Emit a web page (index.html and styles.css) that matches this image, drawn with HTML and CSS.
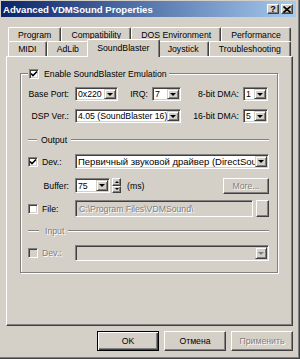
FILE: index.html
```html
<!DOCTYPE html>
<html>
<head>
<meta charset="utf-8">
<link rel="stylesheet" href="styles.css">
</head>
<body>
<div class="window">
  <div class="titlebar">
    <span class="title">Advanced VDMSound Properties</span>
    <div class="tbtns">
      <span class="tbtn help">?</span>
      <span class="tbtn close"><svg width="8" height="7" viewBox="0 0 8 7"><path d="M0.5 0.5 L7.5 6.5 M7.5 0.5 L0.5 6.5" stroke="#000" stroke-width="1.6"/></svg></span>
    </div>
  </div>
  <div class="content">
    <div class="tabs">
      <div class="tabrow back">
        <div class="tab">Program</div>
        <div class="tab">Compatibility</div>
        <div class="tab">DOS Environment</div>
        <div class="tab">Performance</div>
      </div>
      <div class="tabrow front">
        <div class="tab">MIDI</div>
        <div class="tab">AdLib</div>
        <div class="tab selected">SoundBlaster</div>
        <div class="tab">Joystick</div>
        <div class="tab">Troubleshooting</div>
      </div>
    </div>
    <div class="panel">
      <div class="group">
        <div class="legend">
          <span class="check checked"><svg width="8" height="8" viewBox="0 0 8 8"><path d="M1 3.5 L3 5.5 L7 1.5" fill="none" stroke="#000" stroke-width="1.6"/></svg></span>
          <span class="ltext">Enable SoundBlaster Emulation</span>
        </div>
        <div class="row r1">
          <span class="lbl w47">Base Port:</span>
          <span class="combo w43"><span class="val">0x220</span><span class="drop"><i></i></span></span>
          <span class="lbl w34">IRQ:</span>
          <span class="combo w29"><span class="val">7</span><span class="drop"><i></i></span></span>
          <span class="lbl w62">8-bit DMA:</span>
          <span class="combo w25"><span class="val">1</span><span class="drop"><i></i></span></span>
        </div>
        <div class="row r2">
          <span class="lbl w47">DSP Ver.:</span>
          <span class="combo w106"><span class="val">4.05 (SoundBlaster 16)</span><span class="drop"><i></i></span></span>
          <span class="lbl w62">16-bit DMA:</span>
          <span class="combo w25"><span class="val">5</span><span class="drop"><i></i></span></span>
        </div>
        <div class="sep s-out">
          <span class="line short"></span><span class="stext">Output</span><span class="line long"></span>
        </div>
        <div class="row r3">
          <span class="check checked"><svg width="8" height="8" viewBox="0 0 8 8"><path d="M1 3.5 L3 5.5 L7 1.5" fill="none" stroke="#000" stroke-width="1.6"/></svg></span>
          <span class="clbl">Dev.:</span>
          <span class="combo wfull"><span class="val cyr">Первичный звуковой драйвер (DirectSound)</span><span class="drop"><i></i></span></span>
        </div>
        <div class="row r4">
          <span class="lbl w47">Buffer:</span>
          <span class="combo w34c"><span class="val">75</span><span class="drop"><i></i></span></span>
          <span class="spin"><span class="sbtn"><i class="up"></i></span><span class="sbtn"><i class="down"></i></span></span>
          <span class="ms">(ms)</span>
          <span class="btn small disabled">More...</span>
        </div>
        <div class="row r5">
          <span class="check"></span>
          <span class="clbl">File:</span>
          <span class="edit disabled">C:\Program Files\VDMSound\</span>
          <span class="btn browse"></span>
        </div>
        <div class="sep s-in">
          <span class="line short2"></span><span class="stext disabled">Input</span><span class="line long"></span>
        </div>
        <div class="row r6">
          <span class="check disabledbox"></span>
          <span class="clbl disabled">Dev.:</span>
          <span class="combo wfull disabledcombo"><span class="val"></span><span class="drop"><i class="gray"></i></span></span>
        </div>
      </div>
    </div>
    <div class="buttons">
      <span class="btn big default">OK</span>
      <span class="btn big">Отмена</span>
      <span class="btn big disabled">Применить</span>
    </div>
  </div>
</div>
</body>
</html>
```

FILE: styles.css
```css
* { box-sizing: border-box; }
html, body { margin: 0; padding: 0; }
body {
  width: 300px; height: 359px; overflow: hidden;
  background: #d4d0c8;
  font-family: "Liberation Sans", Arial, sans-serif;
  font-size: 8.7px;
  color: #000;
}
.window {
  width: 300px; height: 359px;
  background: #d4d0c8;
  border-right: 1px solid #404040;
  border-bottom: 1px solid #404040;
  box-shadow: inset -1px -1px 0 #808080;
  padding: 1px 3px 0 1px;
  display: flex; flex-direction: column;
}
.titlebar {
  height: 16px;
  background: linear-gradient(to right, #0a246a, #a6caf0);
  display: flex; align-items: center; justify-content: space-between;
  padding: 0 3px 0 2px;
}
.title { color: #fff; font-weight: bold; font-size: 9.6px; letter-spacing: 0; }
.tbtns { display: flex; gap: 2px; }
.tbtn {
  width: 12px; height: 10px; background: #d4d0c8;
  border: 1px solid; border-color: #fff #404040 #404040 #fff;
  box-shadow: inset -1px -1px 0 #808080;
  display: flex; align-items: center; justify-content: center;
  font-weight: bold; font-size: 9px; line-height: 1;
}
.content { display: flex; flex-direction: column; padding: 10px 0 0 5px; }
.tabs { margin-left: 2px; width: 283px; display: flex; flex-direction: column; }
.tabrow { display: flex; }
.tabrow.back { height: 14px; }
.tabrow.front { height: 15px; }
.tab {
  flex: 1 1 auto;
  text-align: center;
  border: 1px solid; border-color: #fff #404040 transparent #fff;
  border-bottom: 0;
  border-radius: 2px 2px 0 0;
  box-shadow: inset -1px 0 0 #808080;
  padding-top: 2px;
  white-space: nowrap;
  background: #d4d0c8;
}
.tab.selected {
  position: relative; z-index: 2;
  margin: -2px -2px -1px; padding-top: 3px;
}
.panel {
  width: 287px; height: 270px;
  border: 1px solid; border-color: #fff #404040 #404040 #fff;
  box-shadow: inset -1px -1px 0 #808080;
  padding: 16px 14px 0 13px;
}
.group {
  height: 200px;
  border: 1px solid #808080;
  box-shadow: inset 1px 1px 0 #fff, 1px 1px 0 #fff;
  padding: 0 8px 0 7px;
  display: flex; flex-direction: column;
}
.legend {
  display: flex; align-items: center; align-self: flex-start;
  margin-top: -6px; height: 11px; background: #d4d0c8;
  padding: 0 2px 0 1px;
}
.ltext { margin-left: 5px; }
.check {
  width: 10px; height: 10px; flex: none;
  background: #fff;
  border: 1px solid; border-color: #808080 #fff #fff #808080;
  box-shadow: inset 1px 1px 0 #404040, inset -1px -1px 0 #d4d0c8;
  display: flex; align-items: center; justify-content: center;
}
.check svg { display: block; }
.check.disabledbox { background: #d4d0c8; }
.row { display: flex; align-items: center; }
.r1 { margin-top: 8px; height: 14px; }
.r2 { margin-top: 8px; height: 14px; }
.r3 { margin-top: 9px; height: 15px; }
.r4 { margin-top: 9px; height: 15px; }
.r5 { margin-top: 7px; height: 17px; }
.r6 { margin-top: 9px; height: 16px; }
.lbl { text-align: right; padding-right: 6px; flex: none; white-space: nowrap; }
.w47 { width: 47px; }
.w34 { width: 34px; padding-right: 4px; }
.w62 { width: 62px; padding-right: 4px; }
.combo {
  height: 100%; flex: none;
  background: #fff;
  border: 1px solid; border-color: #808080 #fff #fff #808080;
  box-shadow: inset 1px 1px 0 #404040, inset -1px -1px 0 #d4d0c8;
  display: flex; align-items: stretch;
  padding: 1px;
  white-space: nowrap; overflow: hidden;
}
.val { flex: 1 1 auto; min-width: 0; overflow: hidden; display: flex; align-items: center; padding-left: 1px; }
.val.cyr { font-size: 9.5px; }
.drop {
  width: 12px; flex: none;
  background: #d4d0c8;
  border: 1px solid; border-color: #d4d0c8 #404040 #404040 #d4d0c8;
  box-shadow: inset 1px 1px 0 #fff, inset -1px -1px 0 #808080;
  display: flex; align-items: center; justify-content: center;
}
.drop i {
  width: 0; height: 0;
  border-left: 3px solid transparent; border-right: 3px solid transparent;
  border-top: 3px solid #000;
}
.drop i.gray { border-top-color: #808080; }
.w43 { width: 43px; }
.w29 { width: 29px; }
.w25 { width: 25px; }
.w106 { width: 106px; }
.w34c { width: 35px; }
.wfull { flex: 1 1 auto; }
.clbl { width: 37px; padding-left: 4px; flex: none; }
.sep { display: flex; align-items: center; height: 11px; }
.s-out { margin-top: 11px; }
.s-in { margin-top: 8px; }
.line { height: 2px; border-top: 1px solid #808080; border-bottom: 1px solid #fff; }
.line.short { width: 9px; margin-right: 4px; }
.line.short2 { width: 11px; margin-right: 6px; }
.line.long { flex: 1 1 auto; margin-left: 4px; }
.disabled { color: #808080; text-shadow: 1px 1px 0 #fff; }
.spin { display: flex; flex-direction: column; width: 9px; height: 100%; margin-left: 2px; }
.sbtn {
  flex: 1 1 0;
  background: #d4d0c8;
  border: 1px solid; border-color: #fff #404040 #404040 #fff;
  box-shadow: inset -1px -1px 0 #808080;
  display: flex; align-items: center; justify-content: center;
}
.sbtn i { width: 0; height: 0; border-left: 2px solid transparent; border-right: 2px solid transparent; }
.sbtn i.up { border-bottom: 2px solid #000; }
.sbtn i.down { border-top: 2px solid #000; }
.ms { margin-left: 6px; }
.btn {
  background: #d4d0c8;
  border: 1px solid; border-color: #fff #404040 #404040 #fff;
  box-shadow: inset -1px -1px 0 #808080;
  display: flex; align-items: center; justify-content: center;
  white-space: nowrap;
}
.btn.small { width: 46px; height: 16px; margin-left: auto; }
.edit {
  width: 178px; height: 100%;
  background: #d4d0c8;
  border: 1px solid; border-color: #808080 #fff #fff #808080;
  box-shadow: inset 1px 1px 0 #404040, inset -1px -1px 0 #d4d0c8;
  display: flex; align-items: center; padding-left: 3px;
  white-space: nowrap; overflow: hidden;
}
.btn.browse { width: 13px; height: 100%; margin-left: auto; }
.disabledcombo { background: #d4d0c8; }
.buttons {
  display: flex; justify-content: flex-end; gap: 5px;
  margin-top: 5px; width: 287px;
}
.btn.big { width: 62px; height: 20px; }
.btn.default {
  border: 1px solid #000;
  box-shadow: inset 1px 1px 0 #fff, inset -1px -1px 0 #404040, inset -2px -2px 0 #808080;
}
```
